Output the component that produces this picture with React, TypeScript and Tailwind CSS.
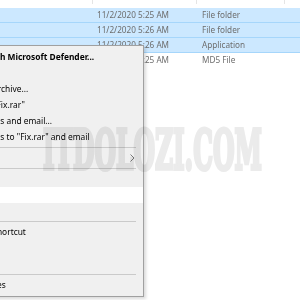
const rows = [
  { date: "11/2/2020 5:25 AM", type: "File folder", selected: true },
  { date: "11/2/2020 5:26 AM", type: "File folder", selected: true },
  { date: "11/2/2020 5:26 AM", type: "Application", selected: true },
  { date: "11/2/2020 5:25 AM", type: "MD5 File", selected: false },
];

type Item = { label?: string; bold?: boolean; sub?: boolean; hover?: boolean; sep?: boolean };

const menu: Item[] = [
  { label: "Scan with Microsoft Defender...", bold: true },
  { label: "Share" },
  { label: "Add to archive..." },
  { label: 'Add to "Fix.rar"' },
  { label: "Compress and email..." },
  { label: 'Compress to "Fix.rar" and email' },
  { sep: true },
  { label: "Send to", sub: true },
  { sep: true },
  { label: "Cut" },
  { label: "Copy", hover: true },
  { label: "Paste" },
  { sep: true },
  { label: "Create shortcut" },
  { label: "Delete" },
  { label: "Rename" },
  { sep: true },
  { label: "Properties" },
];

export default function App() {
  return (
    <div className="relative w-[300px] h-[300px] overflow-hidden bg-white font-['Noto_Sans',sans-serif]">
      {/* column header dividers */}
      <div className="flex h-[8px]">
        <div className="w-[93px] h-[4px] border-r border-[#e5e5e5]" />
        <div className="w-[104px] h-[4px] border-r border-[#e5e5e5]" />
        <div className="w-[88px] h-[4px] border-r border-[#e5e5e5]" />
      </div>

      {/* file rows */}
      <div className="flex flex-col">
        {rows.map((r, i) => (
          <div
            key={i}
            className={`flex items-center h-[15px] text-[8.2px] text-[#6d6d6d] ${
              r.selected ? "bg-[#cce8ff] border-b border-[#a6d6fb]" : ""
            }`}
          >
            <div className="w-[97px]" />
            <div className="w-[105px] whitespace-nowrap">{r.date}</div>
            <div className="whitespace-nowrap">{r.type}</div>
          </div>
        ))}
      </div>

      {/* context menu */}
      <div className="absolute left-[-80px] top-[45px] w-[224px] bg-[#f0f0f0] border border-[#a0a0a0] py-[3px] shadow-[2px_2px_3px_rgba(0,0,0,0.15)]">
        {menu.map((m, i) =>
          m.sep ? (
            <div key={i} className="h-[5px] flex items-center pl-[28px] pr-[7px]">
              <div className="h-px w-full bg-[#cacaca]" />
            </div>
          ) : (
            <div
              key={i}
              className={`relative h-[16px] flex items-center pl-[44px] text-[8.4px] text-black whitespace-nowrap ${
                m.bold ? "font-bold" : ""
              } ${m.hover ? "bg-white" : ""}`}
            >
              {m.label}
              {m.sub && (
                <svg
                  className="absolute right-[8px] top-[4px]"
                  width="5"
                  height="8"
                  viewBox="0 0 5 8"
                  fill="none"
                  stroke="#7a7a7a"
                  strokeWidth="1"
                >
                  <polyline points="0.5,0.5 4,4 0.5,7.5" />
                </svg>
              )}
            </div>
          )
        )}
      </div>

      {/* watermark */}
      <div className="absolute left-[43px] top-[122px] pointer-events-none mix-blend-multiply">
        <div className="origin-left scale-x-[0.45] whitespace-nowrap font-['DejaVu_Serif',serif] font-bold text-[55px] leading-none text-[#ebebeb] [-webkit-text-stroke:4px_#ebebeb]">
          ITDOLOZI.COM
        </div>
      </div>
    </div>
  );
}
